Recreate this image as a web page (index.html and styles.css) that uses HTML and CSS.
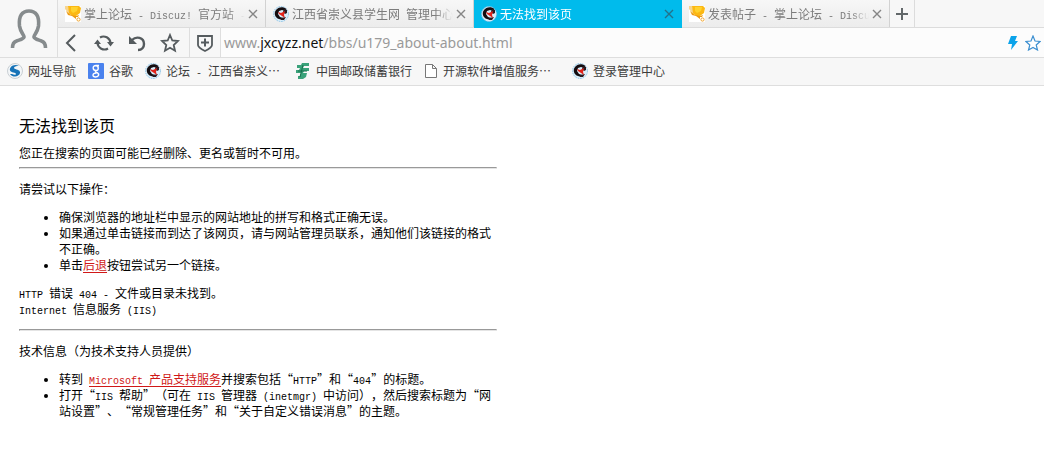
FILE: index.html
```html
<!DOCTYPE html>
<html lang="zh-CN">
<head>
<meta charset="utf-8">
<title>无法找到该页</title>
<link rel="stylesheet" href="styles.css">
</head>
<body>
<svg class="defs" aria-hidden="true">
  <symbol id="trophy" viewBox="0 0 16 16">
    <rect width="16" height="16" fill="#fff"/>
    <path d="M0 0h3l2 6 2 3-3-1-4-5z" fill="#f7d58f"/>
    <path d="M3 0h11l2 2-1 5-4 3H7L4 7z" fill="#fcb813"/>
    <path d="M6 1h7l-1 4-4 2-2-2z" fill="#ffd22e"/>
    <path d="M1 5l5 4 5 1 3-1-1 2-2 0 0 2-4-3-4-1z" fill="#ee9a12"/>
    <circle cx="13.500" cy="13.500" r="1.600" fill="#fff" stroke="#f0a32c"/>
  </symbol>
  <symbol id="seal" viewBox="0 0 16 16">
    <circle cx="8" cy="8" r="7.500" fill="#d9eefa" stroke="#8cc3e6" stroke-dasharray="1.500 1"/>
    <path d="M13.500 3C10 0 5 1 3 4c-2.500 3-1 8 3 9l3 1 1-2-3-1-2-3 1-3 3-1 3 1z" fill="#140d10"/>
    <path d="M11 3l3 1 0 3-2 1-2-2zM8 12l5-1-2 3H8z" fill="#2a1a20"/>
    <path d="M5 6l3 1 4-2-1 4 1 3-3-2-3-2z" fill="#e2231a"/>
  </symbol>
  <symbol id="cross" viewBox="0 0 10 10">
    <path d="M1 1l8 8M9 1L1 9" fill="none" stroke="currentColor" stroke-width="1.400"/>
  </symbol>
</svg>

<header class="chrome">
  <button class="avatar" aria-label="用户">
    <svg width="38" height="42" viewBox="0 0 38 42"><path d="M2.500 40c0-4 1-6 4-7 4-1.500 7-2 7.500-4 .5-2-3.500-4-4.500-11C8.500 8 12 3 19 3s10.500 5 9.500 15c-1 7-5 9-4.500 11 .5 2 3.500 2.500 7.500 4 3 1 4 3 4 7" fill="none" stroke="#868b8d" stroke-width="3.600"/></svg>
  </button>
  <div class="bars">
    <nav class="tabs" aria-label="标签页">
      <div class="tab"><svg class="fav"><use href="#trophy"/></svg><span class="tab-title">掌上论坛<span class="lat"> - Discuz! </span>官方站<span class="lat"> - </span></span><button class="close" aria-label="关闭"><svg><use href="#cross"/></svg></button></div>
      <div class="tab"><svg class="fav"><use href="#seal"/></svg><span class="tab-title">江西省崇义县学生网<span class="lat"> </span>管理中心</span><button class="close" aria-label="关闭"><svg><use href="#cross"/></svg></button></div>
      <div class="tab active"><svg class="fav"><use href="#seal"/></svg><span class="tab-title">无法找到该页</span><button class="close" aria-label="关闭"><svg><use href="#cross"/></svg></button></div>
      <div class="tab"><svg class="fav"><use href="#trophy"/></svg><span class="tab-title">发表帖子<span class="lat"> - </span>掌上论坛<span class="lat"> - Discu</span></span><button class="close" aria-label="关闭"><svg><use href="#cross"/></svg></button></div>
      <button class="new-tab" aria-label="新标签页"><svg width="12" height="12" viewBox="0 0 12 12"><path d="M6 0v12M0 6h12" stroke="#62686a" stroke-width="2"/></svg></button>
    </nav>
    <div class="address">
      <div class="tools">
        <button aria-label="后退"><svg width="20" height="20" viewBox="0 0 20 20"><path d="M14 2L6 10l8 8" fill="none" stroke="#555b5e" stroke-width="2"/></svg></button>
        <button aria-label="刷新"><svg width="20" height="20" viewBox="0 0 20 20"><path d="M6 4.500A7 7 0 0 1 16.500 10M14 15.500A7 7 0 0 1 3.500 10" fill="none" stroke="#555b5e" stroke-width="2.200"/><path d="M13 9h7l-3.500 4.500zM0 11h7L3.500 6.500z" fill="#555b5e"/></svg></button>
        <button aria-label="恢复"><svg width="20" height="20" viewBox="0 0 20 20"><path d="M5 7c4-4 12-3 12 4 0 3-2 6-6 6" fill="none" stroke="#555b5e" stroke-width="2.400"/><path d="M2 3v8h8z" fill="#555b5e"/></svg></button>
        <button aria-label="收藏"><svg width="20" height="20" viewBox="0 0 20 20"><path d="M10 2l2.300 5.500 5.700.5-4.300 4 1.300 5.700-5-3-5 3L6.300 12 2 8l5.700-.5z" fill="none" stroke="#555b5e" stroke-width="1.800"/></svg></button>
      </div>
      <button class="shield" aria-label="安全"><svg width="20" height="20" viewBox="0 0 20 20"><path d="M3 3h14v9c0 2-3 4-7 6-4-2-7-4-7-6z" fill="none" stroke="#555b5e" stroke-width="1.800"/><path d="M10 5.500v8M6 9.500h8" stroke="#555b5e" stroke-width="2"/></svg></button>
      <div class="url" role="textbox" contenteditable="true" spellcheck="false" aria-label="地址">www.<span class="domain">jxcyzz.net</span>/bbs/u179_about-about.html</div>
      <div class="actions">
        <button aria-label="极速模式"><svg width="12" height="16" viewBox="0 0 12 16"><path d="M4 1h6L8 6h3L4 15l1-6H1z" fill="#0ba3ea"/></svg></button>
        <button aria-label="收藏此页"><svg width="16" height="16" viewBox="0 0 16 16"><path d="M8 1l2 5 5 .5-3.800 3.500 1.300 5L8 12.500 3.500 15l1.300-5L1 6.500 6 6z" fill="#fff" stroke="#3c8fd0" stroke-width="1.200"/></svg></button>
      </div>
    </div>
  </div>
</header>

<nav class="bookmarks" aria-label="书签">
  <a href="#"><svg class="fav" viewBox="0 0 16 16"><circle cx="8" cy="8" r="7.500" fill="#f3f6f8" stroke="#c9cfd3"/><path d="M12 3C7 0 2 4 3 7.500 4 10 9 9 9 11c0 1-2 1-4 0l-2 0c3 4 9 3 10-1 .5-4-5-3-6-5 0-1.500 2-2 5-2z" fill="#1673b8"/></svg>网址导航</a>
  <a href="#"><svg class="fav" viewBox="0 0 16 16"><rect width="16" height="16" rx="1" fill="#4a82ee"/><path d="M11 2.500H8c-4 0-3.500 5 0 5 3 0 3-4.500 0-5M8 7.500c-1.500 1 0 1.500 1.200 2.200 3 2 .8 4.300-1.700 4.300-3.500 0-3.500-4 1-4" fill="none" stroke="#fff" stroke-width="1.400"/></svg>谷歌</a>
  <a href="#"><svg class="fav"><use href="#seal"/></svg><span class="cut">论坛<span class="lat"> - </span>江西省崇义⋯</span></a>
  <a href="#"><svg class="fav" viewBox="0 0 16 16"><path d="M7 0h7v3H9L8 5h6v3H9l-1 2h4l-1 4-3 2H3v-3h2l1-3H1V7h3l1-2H2V2h4z" fill="#3aa27a"/><path d="M3 8h9M8 2L5 14" stroke="#166f4c"/></svg>中国邮政储蓄银行</a>
  <a href="#"><svg class="doc" viewBox="0 0 14 16"><path d="M1.500 1.500h7l4 4v9h-11z M8.500 1.500v4h4" fill="#fff" stroke="#777"/></svg><span class="cut">开源软件增值服务⋯</span></a>
  <a href="#"><svg class="fav"><use href="#seal"/></svg>登录管理中心</a>
</nav>

<main class="page">
  <h1>无法找到该页</h1>
  <p class="lead">您正在搜索的页面可能已经删除、更名或暂时不可用。</p>
  <hr>
  <p>请尝试以下操作：</p>
  <ul>
    <li>确保浏览器的地址栏中显示的网站地址的拼写和格式正确无误。</li>
    <li>如果通过单击链接而到达了该网页，请与网站管理员联系，通知他们该链接的格式不正确。</li>
    <li>单击<a href="#">后退</a>按钮尝试另一个链接。</li>
  </ul>
  <p><span class="lat">HTTP </span>错误<span class="lat"> 404 - </span>文件或目录未找到。<br><span class="lat">Internet </span>信息服务<span class="lat"> (IIS)</span></p>
  <hr>
  <p>技术信息（为技术支持人员提供）</p>
  <ul>
    <li>转到<span class="lat"> </span><a href="#"><span class="lat">Microsoft </span>产品支持服务</a>并搜索包括“<span class="lat">HTTP</span>”和“<span class="lat">404</span>”的标题。</li>
    <li>打开“<span class="lat">IIS </span>帮助”（可在<span class="lat"> IIS </span>管理器<span class="lat"> (inetmgr) </span>中访问），然后搜索标题为“网站设置”、“常规管理任务”和“关于自定义错误消息”的主题。</li>
  </ul>
</main>
</body>
</html>
```

FILE: styles.css
```css
* { box-sizing: border-box; }
body {
  margin: 0;
  background: #fff;
  color: #000;
  font: 12px/16px "Noto Sans CJK SC", sans-serif;
  text-spacing-trim: space-all;
}
button {
  display: flex;
  align-items: center;
  justify-content: center;
  padding: 0;
  border: 0;
  background: none;
  color: inherit;
}
.defs { position: absolute; width: 0; height: 0; }
.lat {
  font-family: "Liberation Mono", monospace;
  font-size: 10px;
  line-height: 10px;
  white-space: pre-wrap;
}
.fav { width: 16px; height: 16px; flex: none; }
.doc { width: 14px; height: 16px; flex: none; }

.chrome {
  display: flex;
  background: #f7f7f7;
  border-bottom: 1px solid #dedede;
}
.avatar { width: 58px; flex: none; border-right: 1px solid #dedede; }
.bars { flex: 1; min-width: 0; }

.tabs { display: flex; height: 28px; border-bottom: 1px solid #dcdcdc; }
.tab {
  display: flex;
  align-items: center;
  flex: 0 1 208px;
  min-width: 0;
  gap: 3px;
  padding: 0 7px;
  border-right: 1px solid #d2d2d2;
  background: linear-gradient(#f7f7f7, #ececec);
  color: #7c7c7c;
}
.tab-title {
  flex: 1;
  min-width: 0;
  overflow: hidden;
  white-space: nowrap;
  mask-image: linear-gradient(to right, #000 calc(100% - 18px), transparent);
}
.tab .lat, .bookmarks .lat { white-space: pre; }
.tab.active { height: 28px; background: #00bbec; border-color: #00bbec; color: #fff; }
.close { width: 10px; height: 10px; flex: none; color: #858585; }
.close svg { width: 10px; height: 10px; }
.active .close { color: #23728a; }
.new-tab { width: 25px; flex: none; border-right: 1px solid #dcdcdc; }

.address { display: flex; align-items: stretch; height: 29px; background: #fcfcfc; }
.tools {
  display: flex;
  align-items: center;
  gap: 13px;
  padding: 0 9px 0 3px;
  border-right: 1px solid #dedede;
  background: #f7f7f7;
}
.shield { width: 31px; flex: none; background: #f7f7f7; border-right: 1px solid #dedede; }
.url {
  flex: 1;
  min-width: 0;
  padding-left: 3px;
  overflow: hidden;
  white-space: nowrap;
  font: 14px/29px "Noto Sans", sans-serif;
  color: #9a9a9a;
}
.domain { color: #111; }
.actions { display: flex; align-items: center; gap: 6px; padding-right: 3px; }

.bookmarks {
  display: flex;
  align-items: center;
  gap: 12px;
  height: 28px;
  padding: 0 0 2px 7px;
  overflow: hidden;
  background: #f7f7f7;
  border-bottom: 1px solid #dedede;
  white-space: nowrap;
}
.bookmarks a {
  display: flex;
  align-items: center;
  gap: 5px;
  color: #3c3c3c;
  text-decoration: none;
}
.cut { width: 117px; }

.page { max-width: 497px; padding: 27px 0 0 19px; }
.page h1 { margin: 0; font-size: 16px; line-height: 24px; font-weight: 400; }
.page p { margin: 12px 0; }
.page .lead { margin: 8px 0 0; }
.page hr {
  margin: 10px 0 12px;
  border: 1px solid #999;
  border-color: #999 #e4e4e4 #e4e4e4 #999;
}
.page .lead + hr { margin-top: 6px; }
.page ul { margin: 12px 0; padding-left: 40px; }
.page li::marker { font-size: 10px; }
.page a { color: #d01818; text-decoration: underline; text-underline-offset: 2px; }
```
